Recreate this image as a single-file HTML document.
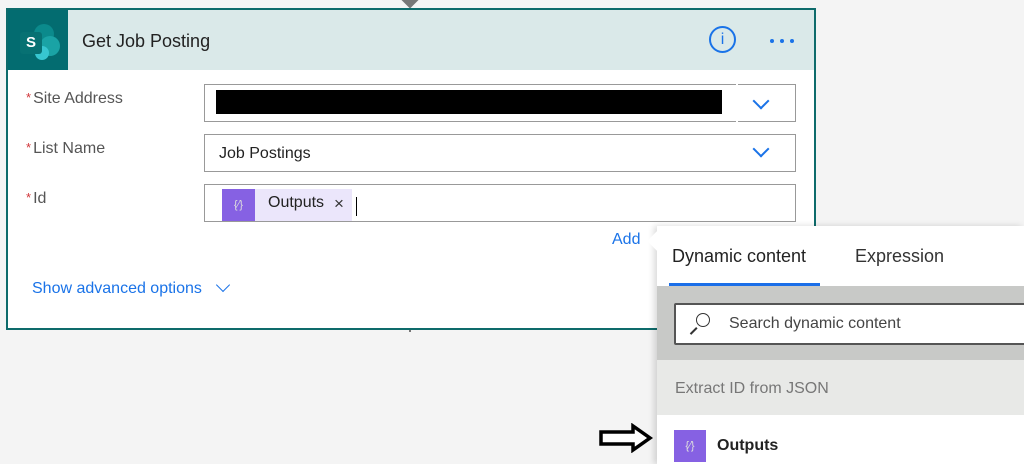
<!DOCTYPE html>
<html><head><style>
*{box-sizing:border-box;margin:0;padding:0}
body{width:1024px;height:464px;background:#f4f4f4;font-family:"Liberation Sans",sans-serif;position:relative;overflow:hidden}
.abs{position:absolute}
.card{left:6px;top:8px;width:810px;height:322px;border:2px solid #0e6b6b;background:#fff}
.hdr{left:0;top:0;width:806px;height:60px;background:#dae9e9}
.ico{left:0;top:0;width:60px;height:60px;background:#036c70}
.lbl{font-size:16px;color:#555}
.lbl b{color:#d13438;font-weight:normal;font-size:13px;vertical-align:top;margin-right:2px}
.inp{border:1px solid #999;background:#fff;height:38px}
.chev{width:12px;height:12px;border-right:2px solid #1a73e8;border-bottom:2px solid #1a73e8;transform:rotate(45deg)}
</style></head><body>
<div class="abs" style="left:404px;top:-6px;width:12px;height:12px;background:#777;transform:rotate(45deg)"></div>
<div class="abs" style="left:409px;top:320px;width:2px;height:12px;background:#777"></div>
<div class="abs card">
 <div class="abs hdr"></div>
 <div class="abs ico">
  <div class="abs" style="left:26px;top:14px;width:20px;height:20px;border-radius:50%;background:#0b8a8c"></div>
  <div class="abs" style="left:32px;top:26px;width:20px;height:20px;border-radius:50%;background:#1aa3a5"></div>
  <div class="abs" style="left:27px;top:36px;width:14px;height:14px;border-radius:50%;background:#37c6d0"></div>
  <div class="abs" style="left:12px;top:22px;width:22px;height:22px;border-radius:3px;background:#077173;color:#fff;font-weight:bold;font-size:15px;text-align:center;line-height:22px">S</div>
 </div>
 <div class="abs" style="left:74px;top:21px;font-size:18px;color:#222">Get Job Posting</div>
 <div class="abs" style="left:701px;top:16px;width:27px;height:27px;border:2px solid #1a73e8;border-radius:50%;color:#1a73e8;text-align:center;font-size:16px;line-height:23px">i</div>
 <div class="abs" style="left:762px;top:29px;width:4px;height:4px;border-radius:50%;background:#1a73e8;box-shadow:10px 0 #1a73e8,20px 0 #1a73e8"></div>
 <div class="abs lbl" style="left:18px;top:80px"><b>*</b>Site Address</div>
 <div class="abs lbl" style="left:18px;top:130px"><b>*</b>List Name</div>
 <div class="abs lbl" style="left:18px;top:180px"><b>*</b>Id</div>
 <div class="abs inp" style="left:196px;top:74px;width:592px">
  <div class="abs" style="left:11px;top:5px;width:506px;height:24px;background:#000"></div>
  <div class="abs" style="left:531px;top:-1px;width:2px;height:38px;background:#fff"></div>
  <div class="abs chev" style="left:550px;top:10px"></div>
 </div>
 <div class="abs inp" style="left:196px;top:124px;width:592px">
  <div class="abs" style="left:14px;top:10px;font-size:16px;color:#222">Job Postings</div>
  <div class="abs chev" style="left:550px;top:8px"></div>
 </div>
 <div class="abs inp" style="left:196px;top:174px;width:592px">
  <div class="abs" style="left:17px;top:4px;width:130px;height:32px;background:#ebe6fb"></div>
  <div class="abs" style="left:17px;top:4px;width:33px;height:32px;background:#8661e3;color:#ddd;font-size:11px;text-align:center;line-height:32px">{∕}</div>
  <div class="abs" style="left:63px;top:9px;font-size:16px;color:#222">Outputs</div>
  <div class="abs" style="left:129px;top:9px;font-size:17px;color:#333">×</div>
  <div class="abs" style="left:151px;top:12px;width:1px;height:19px;background:#000"></div>
 </div>
 <div class="abs" style="left:604px;top:221px;font-size:16px;color:#1a73e8">Add</div>
 <div class="abs" style="left:24px;top:270px;font-size:16px;color:#1a73e8">Show advanced options</div>
 <div class="abs chev" style="left:210px;top:270px;width:10px;height:10px;border-width:1.5px"></div>
</div>
<div class="abs" style="left:657px;top:226px;width:367px;height:238px;background:#fff;box-shadow:-3px 0 6px rgba(0,0,0,.15)">
 <div class="abs" style="left:-7px;top:8px;width:14px;height:14px;background:#fff;transform:rotate(45deg)"></div>
 <div class="abs" style="left:15px;top:20px;font-size:18px;color:#222">Dynamic content</div>
 <div class="abs" style="left:198px;top:20px;font-size:18px;color:#333">Expression</div>
 <div class="abs" style="left:12px;top:57px;width:151px;height:3px;background:#1a6ee8"></div>
 <div class="abs" style="left:0;top:60px;width:367px;height:74px;background:#c8c9c7"></div>
 <div class="abs" style="left:17px;top:77px;width:360px;height:42px;background:#fff;border:2px solid #555;border-radius:2px"></div>
 <div class="abs" style="left:39px;top:87px;width:14px;height:14px;border:1.5px solid #333;border-radius:50%"></div>
 <div class="abs" style="left:32px;top:104px;width:9px;height:1.5px;background:#333;transform:rotate(-45deg)"></div>
 <div class="abs" style="left:72px;top:89px;font-size:16px;color:#444">Search dynamic content</div>
 <div class="abs" style="left:0;top:134px;width:367px;height:55px;background:#e8e9e7"></div>
 <div class="abs" style="left:18px;top:154px;font-size:16px;color:#777">Extract ID from JSON</div>
 <div class="abs" style="left:17px;top:204px;width:32px;height:32px;background:#8661e3;color:#ddd;font-size:11px;text-align:center;line-height:32px">{∕}</div>
 <div class="abs" style="left:60px;top:211px;font-size:16px;font-weight:bold;color:#222">Outputs</div>
</div>
<svg class="abs" style="left:598px;top:423px" width="56" height="30"><path d="M3 9 H35 V3 L52 15 L35 27 V21 H3 Z" fill="#fff" stroke="#000" stroke-width="3.5"/></svg>
</body></html>
